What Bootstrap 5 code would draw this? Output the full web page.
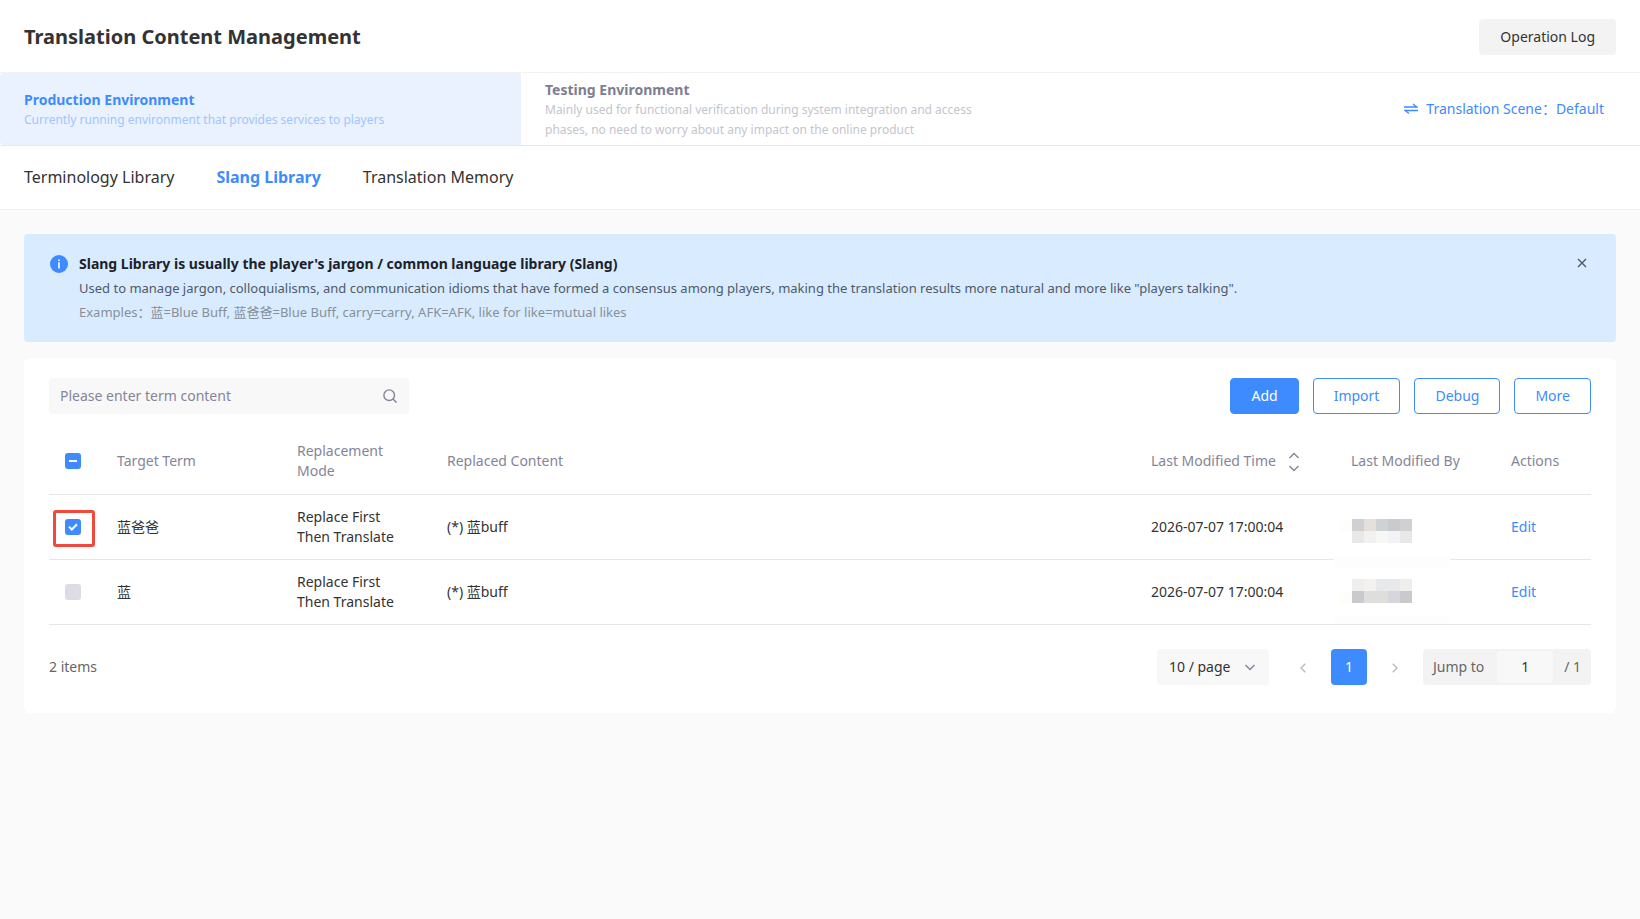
<!DOCTYPE html>
<html lang="en">
<head>
<meta charset="utf-8">
<meta name="viewport" content="width=device-width, initial-scale=1">
<title>Translation Content Management</title>
<link href="https://cdn.jsdelivr.net/npm/bootstrap@5.3.0/dist/css/bootstrap.min.css" rel="stylesheet">
<style>
:root { --brand: #3d8bff; --ink: #333; --muted-ink: #84859a; --line: #e7e7e7; }
body { font-family: "Noto Sans", "Noto Sans CJK SC", sans-serif; font-size: 14px; line-height: 20px; color: var(--ink); background: #fafafa; }
a { text-decoration: none; color: var(--brand); }
.page-title { font-size: 20px; line-height: 28px; font-weight: 700; }
.top-bar { height: 73px; padding-top: 2px; border-bottom: 1px solid #f2f2f2; }
.btn { --bs-btn-font-size: 14px; --bs-btn-line-height: 20px; --bs-btn-padding-x: 20px; --bs-btn-padding-y: 7px; --bs-btn-border-radius: 4px; }
.btn-soft { --bs-btn-bg: #f3f3f3; --bs-btn-border-color: #f3f3f3; --bs-btn-color: #333; --bs-btn-hover-bg: #e9e9e9; }
.btn-brand { --bs-btn-bg: var(--brand); --bs-btn-border-color: var(--brand); --bs-btn-color: #fff; --bs-btn-hover-bg: #2f7bec; --bs-btn-hover-color: #fff; }
.btn-line { --bs-btn-bg: #fff; --bs-btn-border-color: var(--brand); --bs-btn-color: var(--brand); --bs-btn-hover-bg: #eaf2ff; --bs-btn-hover-color: var(--brand); }
.env-bar { height: 73px; border-bottom: 1px solid var(--line); }
.env-tab { border: 0; background: none; text-align: left; color: #7d7e93; padding: 1px 24px 0; }
.env-tab.active { flex: 0 0 521px; background: #eaf2ff; color: var(--brand); border-radius: 4px 0 0 4px; }
.env-tab strong { display: block; font-weight: 700; line-height: 21px; }
.env-tab span { display: block; font-size: 12px; color: #c5c5ce; max-width: 450px; }
.env-tab.active span { color: #a0c6ff; }
.scene-link { margin-right: 36px; }
.lib-tabs { height: 64px; gap: 42px; padding-bottom: 2px; border-bottom: 1px solid #f0f0f0; font-size: 16px; }
.lib-tabs a { color: var(--ink); }
.lib-tabs a.active { color: var(--brand); font-weight: 700; }
.tip-box { background: #d9ecff; border-radius: 4px; padding: 18px 26px; gap: 11px; line-height: 24px; }
.tip-box h2 { font-size: 14px; line-height: 24px; font-weight: 700; color: #1d2129; margin: 0; }
.tip-box p { font-size: 13px; margin: 0; color: #4e5969; }
.tip-box .example { color: #86909c; }
.tip-icon { margin-top: 3px; }
.tip-close { border: 0; background: none; padding: 0; width: 20px; height: 22px; margin-right: -2px; }
.panel { background: #fff; border-radius: 6px; margin-top: 16px; padding: 20px 25px 28px; }
.search-box { width: 360px; height: 36px; background: #f8f8f8; border-radius: 4px; padding: 0 12px 0 11px; }
.search-box input { border: 0; background: none; outline: 0; flex: 1; min-width: 0; padding: 0; color: var(--ink); }
.search-box input::placeholder { color: var(--muted-ink); opacity: 1; }
.actions { gap: 14px; }
.term-table { table-layout: fixed; margin: 15px 0 0; --bs-table-bg: transparent; --bs-table-color: var(--ink); }
.term-table th, .term-table td { padding: 12px 16px; height: 65px; vertical-align: middle; border-bottom: 1px solid var(--line); }
.term-table th { color: var(--muted-ink); font-weight: 400; }
.col-pick { width: 52px; }
.col-term { width: 180px; }
.col-mode { width: 150px; }
.col-time { width: 200px; }
.col-user { width: 160px; }
.col-edit { width: 96px; }
.sort-icon { margin-left: 12px; }
.term-table .form-check-input { display: block; width: 16px; height: 16px; margin: 0; border: 0; border-radius: 3px; background-color: #dcdce6; background-size: 16px 16px; cursor: pointer; }
.term-table .form-check-input:checked { background-color: var(--brand); background-image: url("data:image/svg+xml,%3csvg xmlns='http://www.w3.org/2000/svg' viewBox='0 0 16 16'%3e%3cpath fill='none' stroke='%23fff' stroke-width='2' d='M4 7.6l2.8 2.9L12 5.2'/%3e%3c/svg%3e"); }
.term-table .form-check-input:indeterminate { background-color: var(--brand); background-image: url("data:image/svg+xml,%3csvg xmlns='http://www.w3.org/2000/svg' viewBox='0 0 16 16'%3e%3cpath fill='none' stroke='%23fff' stroke-width='2' d='M4 8h8'/%3e%3c/svg%3e"); }
.highlight-frame { position: absolute; left: 4px; top: 15px; width: 42px; height: 37px; border: 3px solid #f2493d; border-radius: 3px; pointer-events: none; }
.masked-names { position: absolute; left: -1px; top: 12px; }
.pager { margin-top: 24px; }
.item-count { color: #666; }
.pager-size { appearance: none; border: 0; border-radius: 4px; width: 112px; height: 36px; padding: 0 12px; color: var(--ink); background: #f8f8f8 url("data:image/svg+xml,%3csvg xmlns='http://www.w3.org/2000/svg' viewBox='0 0 12 12'%3e%3cpath fill='none' stroke='%2384859a' stroke-width='1.4' d='M1.5 4L6 8.4 10.5 4'/%3e%3c/svg%3e") no-repeat right 13px center / 12px 12px; }
.pager-nav { margin: 0 10px 0 16px; gap: 10px; }
.pager-nav button { border: 0; padding: 0; width: 36px; height: 36px; background: none; border-radius: 4px; }
.pager-nav .current { background: var(--brand); color: #fff; }
.jump-box { width: 168px; height: 36px; background: #f3f3f3; border-radius: 4px; padding: 0 10px; color: #666; }
.jump-box input { width: 56px; height: 32px; margin-left: 13px; border: 0; border-radius: 4px; background: #f8f8f8; text-align: center; color: var(--ink); padding: 0; }
</style>
</head>
<body>
<header class="top-bar bg-white d-flex align-items-center justify-content-between px-4">
  <h1 class="page-title m-0">Translation Content Management</h1>
  <button type="button" class="btn btn-soft">Operation Log</button>
</header>

<section class="env-bar bg-white d-flex align-items-stretch">
  <button type="button" class="env-tab active"><strong>Production Environment</strong><span>Currently running environment that provides services to players</span></button>
  <button type="button" class="env-tab"><strong>Testing Environment</strong><span>Mainly used for functional verification during system integration and access phases, no need to worry about any impact on the online product</span></button>
  <a href="#" class="scene-link d-flex align-items-center gap-2 ms-auto">
    <svg width="14" height="14" viewBox="0 0 14 14" fill="none" stroke="currentColor" stroke-width="1.3"><path d="M0 5h13L9 2M14 8.500H1l4 3"/></svg>
    <span>Translation Scene：Default</span>
  </a>
</section>

<nav class="lib-tabs bg-white d-flex align-items-center px-4">
  <a href="#">Terminology Library</a>
  <a href="#" class="active" aria-current="page">Slang Library</a>
  <a href="#">Translation Memory</a>
</nav>

<main class="p-4">
  <section class="tip-box d-flex align-items-start">
    <svg class="tip-icon flex-shrink-0" width="18" height="18" viewBox="0 0 18 18"><circle cx="9" cy="9" r="9" fill="#3d8bff"/><path d="M8.200 4.500h1.600v1.600H8.200zM8.200 7.200h1.600v6.300H8.200z" fill="#fff"/></svg>
    <div class="flex-grow-1">
      <h2>Slang Library is usually the player's jargon / common language library (Slang)</h2>
      <p>Used to manage jargon, colloquialisms, and communication idioms that have formed a consensus among players, making the translation results more natural and more like "players talking".</p>
      <p class="example">Examples：蓝=Blue Buff, 蓝爸爸=Blue Buff, carry=carry, AFK=AFK, like for like=mutual likes</p>
    </div>
    <button type="button" class="tip-close d-flex align-items-center justify-content-center" aria-label="Close">
      <svg width="10" height="10" viewBox="0 0 10 10" stroke="#4e5969" stroke-width="1.4"><path d="M1 1l8 8M9 1L1 9"/></svg>
    </button>
  </section>

  <section class="panel">
    <div class="d-flex justify-content-between align-items-center">
      <label class="search-box d-flex align-items-center">
        <input type="text" placeholder="Please enter term content" aria-label="Term content">
        <svg width="14" height="14" viewBox="0 0 14 14" fill="none" stroke="#84859a" stroke-width="1.4"><circle cx="6.200" cy="6.200" r="5.300"/><path d="M10 10l3.600 3.600"/></svg>
      </label>
      <div class="actions d-flex">
        <button type="button" class="btn btn-brand">Add</button>
        <button type="button" class="btn btn-line">Import</button>
        <button type="button" class="btn btn-line">Debug</button>
        <button type="button" class="btn btn-line">More</button>
      </div>
    </div>

    <table class="table term-table">
      <colgroup><col class="col-pick"><col class="col-term"><col class="col-mode"><col><col class="col-time"><col class="col-user"><col class="col-edit"></colgroup>
      <thead>
        <tr>
          <th><input class="form-check-input" type="checkbox" id="pickAll" aria-label="Select all"></th>
          <th>Target Term</th><th>Replacement Mode</th><th>Replaced Content</th>
          <th class="text-nowrap">Last Modified Time<svg class="sort-icon" width="12" height="20" viewBox="0 0 12 20" fill="none" stroke="#84859a" stroke-width="1.4"><path d="M1.500 6L6 1.500 10.500 6M1.500 14L6 18.500 10.500 14"/></svg></th>
          <th>Last Modified By</th><th>Actions</th>
        </tr>
      </thead>
      <tbody>
        <tr>
          <td class="position-relative"><input class="form-check-input" type="checkbox" checked aria-label="Select 蓝爸爸"><span class="highlight-frame"></span></td>
          <td>蓝爸爸</td><td>Replace First Then Translate</td><td>(*) 蓝buff</td><td>2026-07-07 17:00:04</td>
          <td class="position-relative">
            <svg class="masked-names" width="116" height="117" shape-rendering="crispEdges" aria-hidden="true">
              <path fill="#fff" d="M0 0h116v108H0z"/>
              <path fill="#fdfdfd" d="M0 48h116v12H0zM0 108h116v9H0z"/>
              <path fill="#fefdfa" d="M6 12h12v12H6zM6 84h12v12H6z"/>
              <path fill="#cfd0d2" d="M18 12h12v12H18zM66 12h12v12H66z"/><path fill="#e5e1da" d="M30 12h12v12H30z"/><path fill="#cdd2d5" d="M42 12h12v12H42z"/><path fill="#cacacd" d="M54 12h12v12H54z"/>
              <path fill="#e8e8e9" d="M18 24h12v12H18zM66 24h12v12H66z"/><path fill="#f1f1f2" d="M30 24h12v12H30z"/><path fill="#f7f7f5" d="M42 24h12v12H42z"/><path fill="#f3f3f7" d="M54 24h12v12H54z"/>
              <path fill="#eeeeed" d="M18 72h12v12H18zM66 72h12v12H66z"/><path fill="#f3f2f1" d="M30 72h12v12H30z"/><path fill="#e8e9ea" d="M42 72h24v12H42z"/>
              <path fill="#cacacd" d="M18 84h12v12H18zM66 84h12v12H66z"/><path fill="#dededd" d="M30 84h24v12H30z"/><path fill="#d5d7dc" d="M54 84h12v12H54z"/>
            </svg>
          </td>
          <td><a href="#">Edit</a></td>
        </tr>
        <tr>
          <td><input class="form-check-input" type="checkbox" aria-label="Select 蓝"></td>
          <td>蓝</td><td>Replace First Then Translate</td><td>(*) 蓝buff</td><td>2026-07-07 17:00:04</td><td></td>
          <td><a href="#">Edit</a></td>
        </tr>
      </tbody>
    </table>

    <div class="pager d-flex align-items-center">
      <span class="item-count me-auto">2 items</span>
      <select class="pager-size" aria-label="Items per page"><option>10 / page</option><option>20 / page</option></select>
      <div class="pager-nav d-flex">
        <button type="button" aria-label="Previous page"><svg width="6" height="10" viewBox="0 0 6 10" fill="none" stroke="#bbb" stroke-width="1.4"><path d="M5.300 .8L1 5l4.300 4.200"/></svg></button>
        <button type="button" class="current" aria-current="page">1</button>
        <button type="button" aria-label="Next page"><svg width="6" height="10" viewBox="0 0 6 10" fill="none" stroke="#bbb" stroke-width="1.4"><path d="M.7 .8L5 5 .7 9.200"/></svg></button>
      </div>
      <div class="jump-box d-flex align-items-center">
        <label for="jumpTo">Jump to</label>
        <input type="text" id="jumpTo" value="1">
        <span class="ms-auto">/ 1</span>
      </div>
    </div>
  </section>
</main>
<script src="https://cdn.jsdelivr.net/npm/bootstrap@5.3.0/dist/js/bootstrap.bundle.min.js"></script>
<script>document.getElementById('pickAll').indeterminate = true;</script>
</body>
</html>
